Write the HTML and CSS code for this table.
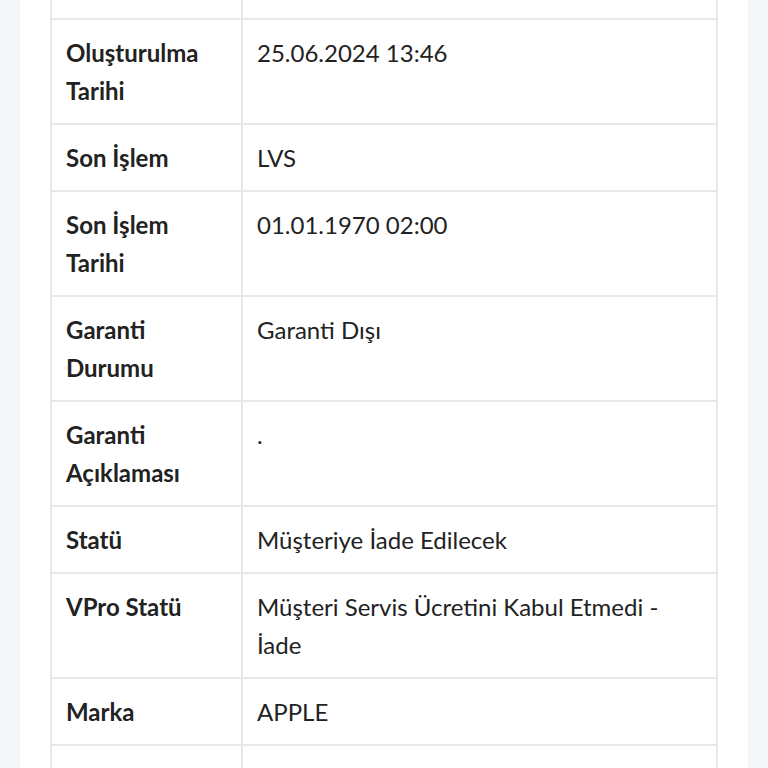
FILE: index.html
```html
<!DOCTYPE html>
<html lang="tr">
<head>
<meta charset="utf-8">
<link rel="stylesheet" href="styles.css">
</head>
<body>
<div class="page">
  <div class="card">
    <table class="details">
      <tr class="cut-top"><th></th><td></td></tr>
      <tr><th>Oluşturulma Tarihi</th><td>25.06.2024 13:46</td></tr>
      <tr><th>Son İşlem</th><td>LVS</td></tr>
      <tr><th>Son İşlem Tarihi</th><td>01.01.1970 02:00</td></tr>
      <tr><th>Garanti Durumu</th><td>Garanti Dışı</td></tr>
      <tr><th>Garanti Açıklaması</th><td>.</td></tr>
      <tr><th>Statü</th><td>Müşteriye İade Edilecek</td></tr>
      <tr><th>VPro Statü</th><td>Müşteri Servis Ücretini Kabul Etmedi - İade</td></tr>
      <tr><th>Marka</th><td>APPLE</td></tr>
      <tr class="cut-bottom"><th></th><td></td></tr>
    </table>
  </div>
</div>
</body>
</html>
```
FILE: styles.css
```css
html, body {
  margin: 0;
  padding: 0;
  background: #f5f6f8;
  height: 768px;
  overflow: hidden;
}
.page {
  padding: 0 20px;
  height: 768px;
}
.card {
  background: #ffffff;
  height: 100%;
  padding: 0 30px 0 30px;
}
.details {
  width: 100%;
  border-collapse: collapse;
  font-family: "Lato", "Noto Sans", sans-serif;
  font-size: 24px;
  line-height: 38px;
  color: #222222;
}
.details th,
.details td {
  border: 2px solid #e7e8eb;
  padding: 14px 14px 13px;
  text-align: left;
  vertical-align: top;
}
.details th {
  width: 161px;
  font-weight: 700;
}
.details td {
  font-weight: 400;
}
.details .cut-top th,
.details .cut-top td {
  border-top: none;
  height: 18px;
  padding: 0;
}
.details .cut-bottom th,
.details .cut-bottom td {
  border-bottom: none;
  height: 60px;
  padding: 0;
}
```
